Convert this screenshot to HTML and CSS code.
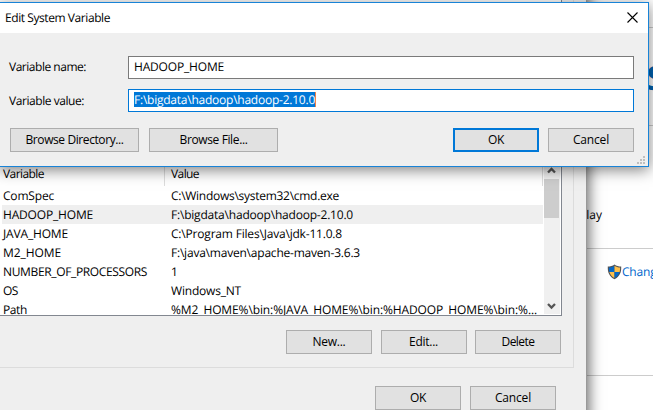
FILE: index.html
```html
<!DOCTYPE html>
<html lang="en">
<head>
<meta charset="utf-8">
<title>Edit System Variable</title>
<link rel="stylesheet" href="styles.css">
</head>
<body>
<main class="desktop">
  <section class="system-page">
    <div class="strip strip-top"></div>
    <div class="strip strip-brand"><span class="brand">s</span></div>
    <div class="strip strip-info"><span class="info" data-w="23">play</span></div>
    <div class="strip strip-change">
      <svg class="shield" viewBox="0 0 15 16" width="15" height="16">
        <path d="M7.5.5C5.7 2 3.2 2.5.8 2.5c-.3 6 1.5 10 6.7 12.8 5.200-2.800 7-6.800 6.700-12.800C11.800 2.500 9.300 2 7.500.5z" fill="#505357"/>
        <path d="M7.500 1.800C5.900 3 4 3.500 1.900 3.600c-.1 1.600 0 3 .5 4.400h5.100z" fill="#0568c8"/>
        <path d="M7.500 1.800C9.100 3 11 3.500 13.100 3.600c.1 1.600 0 3-.5 4.400H7.500z" fill="#ffc04a"/>
        <path d="M2.400 8c.8 2.600 2.400 4.600 5.100 6.100V8z" fill="#ffc04a"/>
        <path d="M12.600 8c-.8 2.600-2.400 4.600-5.100 6.100V8z" fill="#0568c8"/>
      </svg>
      <span class="link" data-w="41">Change</span>
    </div>
  </section>

  <section class="env-window">
    <div class="group">
      <div class="list">
        <div class="table">
          <div class="row head"><span class="name"><span data-w="41">Variable</span></span><span class="value"><span data-w="28">Value</span></span></div>
          <div class="row"><span class="name"><span data-w="51">ComSpec</span></span><span class="value"><span data-w="168">C:\Windows\system32\cmd.exe</span></span></div>
          <div class="row selected"><span class="name"><span data-w="90">HADOOP_HOME</span></span><span class="value"><span data-w="182">F:\bigdata\hadoop\hadoop-2.10.0</span></span></div>
          <div class="row"><span class="name"><span data-w="65">JAVA_HOME</span></span><span class="value"><span data-w="171">C:\Program Files\Java\jdk-11.0.8</span></span></div>
          <div class="row"><span class="name"><span data-w="58">M2_HOME</span></span><span class="value"><span data-w="189">F:\java\maven\apache-maven-3.6.3</span></span></div>
          <div class="row"><span class="name"><span data-w="144">NUMBER_OF_PROCESSORS</span></span><span class="value"><span>1</span></span></div>
          <div class="row"><span class="name"><span data-w="15">OS</span></span><span class="value"><span data-w="70">Windows_NT</span></span></div>
          <div class="row"><span class="name"><span data-w="24">Path</span></span><span class="value"><span data-w="366">%M2_HOME%\bin:%JAVA_HOME%\bin:%HADOOP_HOME%\bin:%...</span></span></div>
        </div>
        <div class="scrollbar">
          <svg class="arrow" viewBox="0 0 15 16" width="15" height="16"><path d="M4 9.500 7.500 6 11 9.500" /></svg>
          <div class="thumb"></div>
          <svg class="arrow down" viewBox="0 0 15 16" width="15" height="16"><path d="M4 6 7.500 9.500 11 6" /></svg>
        </div>
      </div>
      <div class="list-actions">
        <button><span data-w="33">New...</span></button>
        <button><span data-w="29">Edit...</span></button>
        <button><span data-w="33">Delete</span></button>
      </div>
    </div>
    <div class="env-actions">
      <button><span data-w="16">OK</span></button>
      <button><span data-w="36">Cancel</span></button>
    </div>
  </section>

  <section class="dialog">
    <header class="titlebar">
      <span data-w="105">Edit System Variable</span>
      <svg viewBox="0 0 11 11" width="11" height="11"><path d="M.5.5l10 10M10.500.5l-10 10"/></svg>
    </header>
    <div class="form">
      <div class="field"><label><span data-w="77">Variable name:</span></label><div class="input"><span data-w="90">HADOOP_HOME</span></div></div>
      <div class="field"><label class="low"><span data-w="75">Variable value:</span></label><div class="input focus"><span class="selection" data-w="181">F:\bigdata\hadoop\hadoop-2.10.0</span></div></div>
    </div>
    <div class="dialog-actions">
      <button class="wide"><span data-w="98">Browse Directory...</span></button>
      <button class="wide"><span data-w="68">Browse File...</span></button>
      <button class="default"><span data-w="16">OK</span></button>
      <button><span data-w="36">Cancel</span></button>
    </div>
    <svg class="grip" viewBox="0 0 8 8" width="8" height="8"><path d="M6 0h2v2H6zM3 3h2v2H3zM6 3h2v2H6zM0 6h2v2H0zM3 6h2v2H3zM6 6h2v2H6z"/></svg>
  </section>
</main>
<script src="fit.js"></script>
</body>
</html>
```
FILE: styles.css
```css
* { box-sizing: border-box; }
body {
  margin: 0;
  font: 12px/19px "Open Sans", "Noto Sans", sans-serif;
  color: #000;
  text-rendering: geometricPrecision;
}
.desktop { position: relative; width: 653px; height: 410px; overflow: hidden; background: #fff; }
span { white-space: pre; }

.system-page { margin-left: 587px; }
.strip { border-bottom: 1px solid #ccc; }
.strip-top { height: 28px; }
.strip-brand { height: 98px; padding: 35px 0 0 59px; }
.brand { font-size: 44px; line-height: 20px; color: #0063b1; font-weight: 600; }
.strip-info { height: 123px; padding: 79px 0 0; }
.info { display: inline-block; margin-left: -8px; }
.strip-change { display: flex; height: 127px; padding: 14px 0 0 20px; }
.shield { flex: none; margin-top: 1px; }
.link { color: #06c; line-height: 18px; }

.env-window {
  position: absolute; left: -30px; top: -40px; width: 617px; height: 480px;
  background: #efefef; border-right: 1px solid #999;
  box-shadow: 2px 0 13px rgba(0, 0, 0, .6);
}
.group { width: 604px; height: 408px; border: 1px solid #dcdcdc; padding-top: 1px; }
.list {
  display: flex; width: 591px; height: 354px; overflow: hidden;
  background: #fff; border: 1px solid #828790; padding: 203px 1px 0 29px;
}
.table { width: 543px; height: 149px; overflow: hidden; }
.row { display: flex; height: 19px; margin-left: 1px; padding-left: 1px; line-height: 19px; }
.row.head { height: 20px; border-right: 1px solid #ddd; line-height: 15px; }
.row.head .name { border-right: 1px solid #ddd; }
.name { width: 162px; }
.value { margin-left: 6px; }
.row.selected { background: #efefef; }
.scrollbar { display: flex; flex-direction: column; width: 17px; padding-left: 1px; height: 148px; background: linear-gradient(to right, #fff 1px, #f0f0f0 1px); }
.thumb { width: 15px; height: 39px; background: #cdcdcd; }
.arrow { flex: none; fill: none; stroke: #555; stroke-width: 2.300; margin-top: -3px; }
.arrow.down { margin: auto 0 0; }
button {
  display: flex; justify-content: center; align-items: center;
  width: 86px; height: 24px; padding: 0 0 1px; border: 1px solid #adadad; border-radius: 0;
  background: #e1e1e1; color: #000; font: inherit;
}
.list-actions { display: flex; gap: 8.500px; margin: 14px 0 0 315px; }
.env-actions { display: flex; gap: 9px; margin: 18px 0 0 405px; }

.dialog {
  position: absolute; left: -2px; top: 2px; width: 651px; height: 165px;
  background: #efefef; border: 1px solid #1883d7;
  box-shadow: 0 3px 14px rgba(0, 0, 0, .5);
}
.titlebar { display: flex; justify-content: space-between; height: 30px; padding: 5px 10px 0 6px; background: #fff; }
.titlebar svg { margin-top: 4px; fill: none; stroke: #000; stroke-width: 1.100; }
.form { display: grid; gap: 10px; padding: 23px 14px 0 10px; }
.field { display: flex; height: 23px; }
.field label { width: 119px; line-height: 22px; }
.field label.low { line-height: 24px; }
.input { flex: 1; border: 1px solid #7a7a7a; background: #fff; padding: 2px 0 0 5px; line-height: 15px; }
.input.focus { border-color: #0078d7; }
.selection { display: inline-block; height: 15px; line-height: 15px; background: #0078d7; color: #fff; border-right: 1px solid #f28347; vertical-align: top; }
.dialog-actions { display: flex; padding: 16px 14px 0 11px; }
.dialog-actions .wide { width: 129px; margin-right: 10px; }
.dialog-actions .default { margin: 0 9px 0 auto; border: 2px solid #0078d7; }
.grip { position: absolute; right: 3px; bottom: 2px; fill: #bfbfbf; }
```
FILE: fit.js
```js
// Tracks each label so its text occupies the width given in data-w.
document.querySelectorAll('[data-w]').forEach(function (el) {
  var range = document.createRange();
  range.selectNodeContents(el);
  var natural = range.getBoundingClientRect().width;
  var spacing = (Number(el.dataset.w) - natural) / el.textContent.length;
  el.style.letterSpacing = spacing.toFixed(3) + 'px';
});
```
